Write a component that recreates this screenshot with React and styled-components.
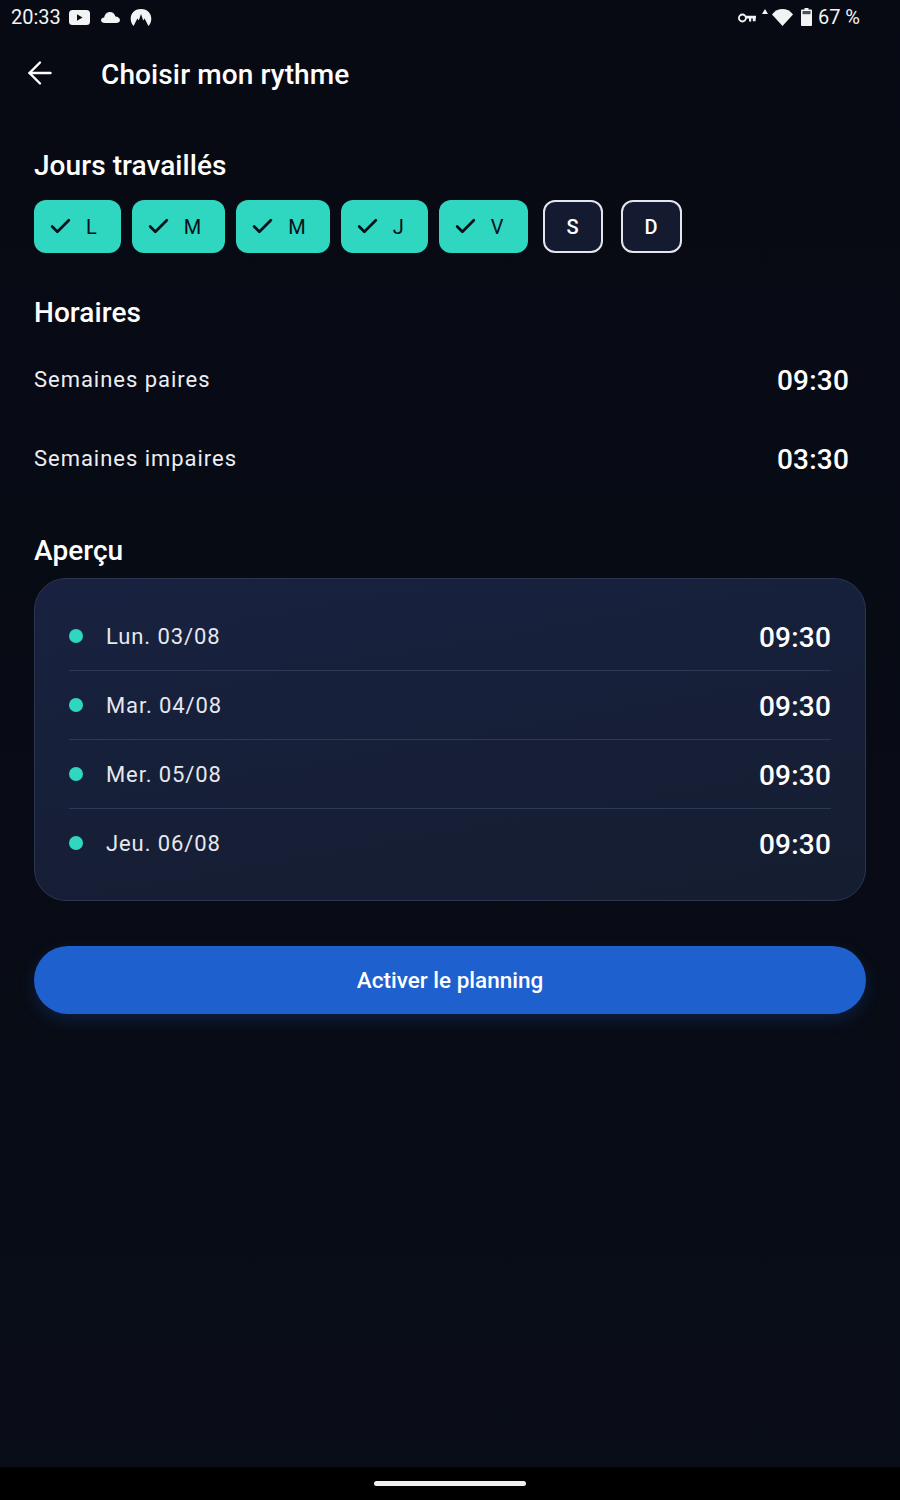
import React from 'react';
import styled, { createGlobalStyle } from 'styled-components';
import { ArrowLeft, Check } from 'lucide-react';

const GlobalStyle = createGlobalStyle`
  html, body {
    margin: 0;
    padding: 0;
    background: #080c16;
  }
  * {
    box-sizing: border-box;
  }
`;

const Page = styled.div`
  width: 900px;
  height: 1500px;
  display: flex;
  flex-direction: column;
  background: linear-gradient(180deg, #070a13 0%, #090d17 100%);
  color: #fff;
  font-family: Roboto, "Liberation Sans", sans-serif;
  overflow: hidden;
`;

const StatusBar = styled.div`
  height: 34px;
  flex: none;
  display: flex;
  align-items: center;
  justify-content: space-between;
  padding: 0 40px 0 11px;
  font-size: 20px;
  color: #f2f3f5;
`;

const StatusGroup = styled.div`
  display: flex;
  align-items: center;
`;

const StatusItem = styled.span`
  display: flex;
  margin-left: ${(p) => p.$left || 0}px;
  margin-top: ${(p) => p.$up || 0}px;
`;

const Header = styled.header`
  height: 80px;
  flex: none;
  display: flex;
  align-items: center;
  padding-left: 22px;
  gap: 43px;
`;

const BackButton = styled.button`
  width: 36px;
  height: 36px;
  margin-bottom: 2px;
  padding: 0;
  border: none;
  background: none;
  color: #fff;
  display: flex;
  align-items: center;
  justify-content: center;
`;

const Title = styled.h1`
  margin: 0;
  padding-top: 2px;
  font-size: 28px;
  line-height: 36px;
  font-weight: 500;
  letter-spacing: 0.12px;
`;

const Main = styled.main`
  flex: 1;
  padding: 0 34px;
`;

const SectionTitle = styled.h2`
  margin: ${(p) => p.$top}px 0 0;
  font-size: 28px;
  line-height: 36px;
  font-weight: 500;
  letter-spacing: 0.06px;
`;

const Days = styled.div`
  display: flex;
  gap: 11px;
  margin-top: 16px;
`;

const Chip = styled.div`
  height: 53px;
  display: flex;
  align-items: center;
  gap: 13px;
  border-radius: 12px;
  font-size: 20px;
  font-weight: ${(p) => (p.$on ? 400 : 500)};
  padding: ${(p) => (p.$on ? '0 24px 0 14px' : '0 22px')};
  margin: ${(p) => (p.$on ? '0' : '0 3px 0 4px')};
  background: ${(p) => (p.$on ? '#2fd6c0' : '#141b30')};
  color: ${(p) => (p.$on ? '#05101a' : '#fff')};
  border: ${(p) => (p.$on ? 'none' : '2px solid #e4e6ec')};
`;

const ScheduleRow = styled.div`
  height: 79px;
  display: flex;
  align-items: center;
  justify-content: space-between;
  padding-right: 17px;
`;

const Schedules = styled.div`
  margin-top: 9px;
`;

const RowLabel = styled.span`
  font-size: 22px;
  letter-spacing: 0.97px;
  color: #eceef2;
`;

const RowTime = styled.span`
  padding-top: 2px;
  font-size: 28px;
  font-weight: 500;
  letter-spacing: 0.2px;
`;

const PreviewCard = styled.section`
  margin-top: 9px;
  height: 323px;
  padding: 22px 34px 0;
  border: 1px solid #2b3550;
  border-radius: 32px;
  background: linear-gradient(170deg, #182240 0%, #151d30 100%);
`;

const PreviewRow = styled.div`
  height: 69px;
  display: flex;
  align-items: center;
  padding-top: ${(p) => (p.$first ? 1 : 0)}px;
  border-top: ${(p) => (p.$first ? 'none' : '1px solid #2d3854')};
`;

const Dot = styled.span`
  width: 14px;
  height: 14px;
  border-radius: 50%;
  background: #2fd6c0;
  flex: none;
`;

const PreviewDate = styled.span`
  margin-left: 23px;
  flex: 1;
  font-size: 22px;
  letter-spacing: 0.9px;
  color: #e6e8ee;
`;

const ActivateButton = styled.button`
  display: block;
  width: 100%;
  height: 68px;
  margin-top: 45px;
  border: none;
  border-radius: 34px;
  background: #1f60cf;
  color: #fff;
  font-family: inherit;
  font-size: 22.5px;
  font-weight: 500;
  box-shadow: 0 6px 16px rgba(31, 96, 207, 0.22);
`;

const NavBar = styled.div`
  height: 33px;
  flex: none;
  background: #000;
  display: flex;
  justify-content: center;
  padding-top: 14px;
`;

const NavPill = styled.div`
  width: 152px;
  height: 5px;
  border-radius: 3px;
  background: #f0f0f0;
`;

const YoutubeIcon = () => (
  <svg width="21" height="15" viewBox="0 0 21 15">
    <rect width="21" height="15" rx="3.5" fill="#f2f3f5" />
    <path d="M8 4.2 L13.5 7.5 L8 10.8 Z" fill="#080c16" />
  </svg>
);

const CloudIcon = () => (
  <svg width="19" height="11" viewBox="0 0 19 11">
    <path
      d="M3.8 11 C1.5 11 0 9.8 0 8.2 C0 6.6 1.4 5.4 3.2 5.4 C3.8 2.2 6 0 9 0 C11.8 0 13.8 1.9 14.4 4.4 C17 4.6 19 6 19 8 C19 9.8 17.4 11 15.2 11 Z"
      fill="#f2f3f5"
    />
  </svg>
);

const VpnLogo = () => (
  <svg width="22" height="17" viewBox="0 0 22 17">
    <path
      d="M3.6 17 C-2 11 0.5 0 11 0 C21.5 0 24 11 18.4 17 L14.6 9.6 L13.2 11.6 L11 5 L8.8 11.6 L7.4 9.6 Z"
      fill="#f2f3f5"
    />
  </svg>
);

const KeyIcon = () => (
  <svg width="18" height="10" viewBox="0 0 18 10" fill="none">
    <circle cx="4.4" cy="5" r="3.5" stroke="#f2f3f5" strokeWidth="1.8" />
    <path d="M7.6 2.8 H18 V5.6 H7.6 Z M11 5 H13.2 V8.6 H11 Z M14.8 5 H17.6 V8.2 H14.8 Z" fill="#f2f3f5" />
  </svg>
);

const SignalArrow = () => (
  <svg width="6" height="5" viewBox="0 0 6 5">
    <path d="M3 0 L6 5 H0 Z" fill="#f2f3f5" />
  </svg>
);

const WifiIcon = () => (
  <svg width="21" height="17" viewBox="0 0 21 17">
    <path d="M0 5.5 C5.5 -1.8 15.5 -1.8 21 5.5 L10.5 17 Z" fill="#f2f3f5" />
  </svg>
);

const BatteryIcon = () => (
  <svg width="11" height="18" viewBox="0 0 11 18">
    <path
      d="M3.5 0 H7.5 V1.5 H9.8 C10.6 1.5 11 1.9 11 2.6 V16.9 C11 17.6 10.6 18 9.8 18 H1.2 C0.4 18 0 17.6 0 16.9 V2.6 C0 1.9 0.4 1.5 1.2 1.5 H3.5 Z"
      fill="#f2f3f5"
    />
    <rect x="1.5" y="3" width="8" height="3.2" fill="#080c16" opacity="0.7" />
  </svg>
);

const days = [
  { label: 'L', on: true },
  { label: 'M', on: true },
  { label: 'M', on: true },
  { label: 'J', on: true },
  { label: 'V', on: true },
  { label: 'S', on: false },
  { label: 'D', on: false },
];

const preview = ['Lun. 03/08', 'Mar. 04/08', 'Mer. 05/08', 'Jeu. 06/08'];

export default function App() {
  return (
    <Page>
      <GlobalStyle />
      <StatusBar>
        <StatusGroup>
          <span>20:33</span>
          <StatusItem $left={8}>
            <YoutubeIcon />
          </StatusItem>
          <StatusItem $left={11}>
            <CloudIcon />
          </StatusItem>
          <StatusItem $left={10}>
            <VpnLogo />
          </StatusItem>
        </StatusGroup>
        <StatusGroup>
          <StatusItem $up={2}>
            <KeyIcon />
          </StatusItem>
          <StatusItem $left={6} $up={-11}>
            <SignalArrow />
          </StatusItem>
          <StatusItem $left={4}>
            <WifiIcon />
          </StatusItem>
          <StatusItem $left={8}>
            <BatteryIcon />
          </StatusItem>
          <StatusItem $left={6}>67 %</StatusItem>
        </StatusGroup>
      </StatusBar>

      <Header>
        <BackButton>
          <ArrowLeft size={36} strokeWidth={1.6} />
        </BackButton>
        <Title>Choisir mon rythme</Title>
      </Header>

      <Main>
        <SectionTitle $top={34}>Jours travaillés</SectionTitle>
        <Days>
          {days.map((d, i) => (
            <Chip key={i} $on={d.on}>
              {d.on && <Check size={25} strokeWidth={2.6} />}
              {d.label}
            </Chip>
          ))}
        </Days>

        <SectionTitle $top={42}>Horaires</SectionTitle>
        <Schedules>
          <ScheduleRow>
            <RowLabel>Semaines paires</RowLabel>
            <RowTime>09:30</RowTime>
          </ScheduleRow>
          <ScheduleRow>
            <RowLabel>Semaines impaires</RowLabel>
            <RowTime>03:30</RowTime>
          </ScheduleRow>
        </Schedules>

        <SectionTitle $top={35}>Aperçu</SectionTitle>
        <PreviewCard>
          {preview.map((date, i) => (
            <PreviewRow key={date} $first={i === 0}>
              <Dot />
              <PreviewDate>{date}</PreviewDate>
              <RowTime>09:30</RowTime>
            </PreviewRow>
          ))}
        </PreviewCard>

        <ActivateButton>Activer le planning</ActivateButton>
      </Main>

      <NavBar>
        <NavPill />
      </NavBar>
    </Page>
  );
}
